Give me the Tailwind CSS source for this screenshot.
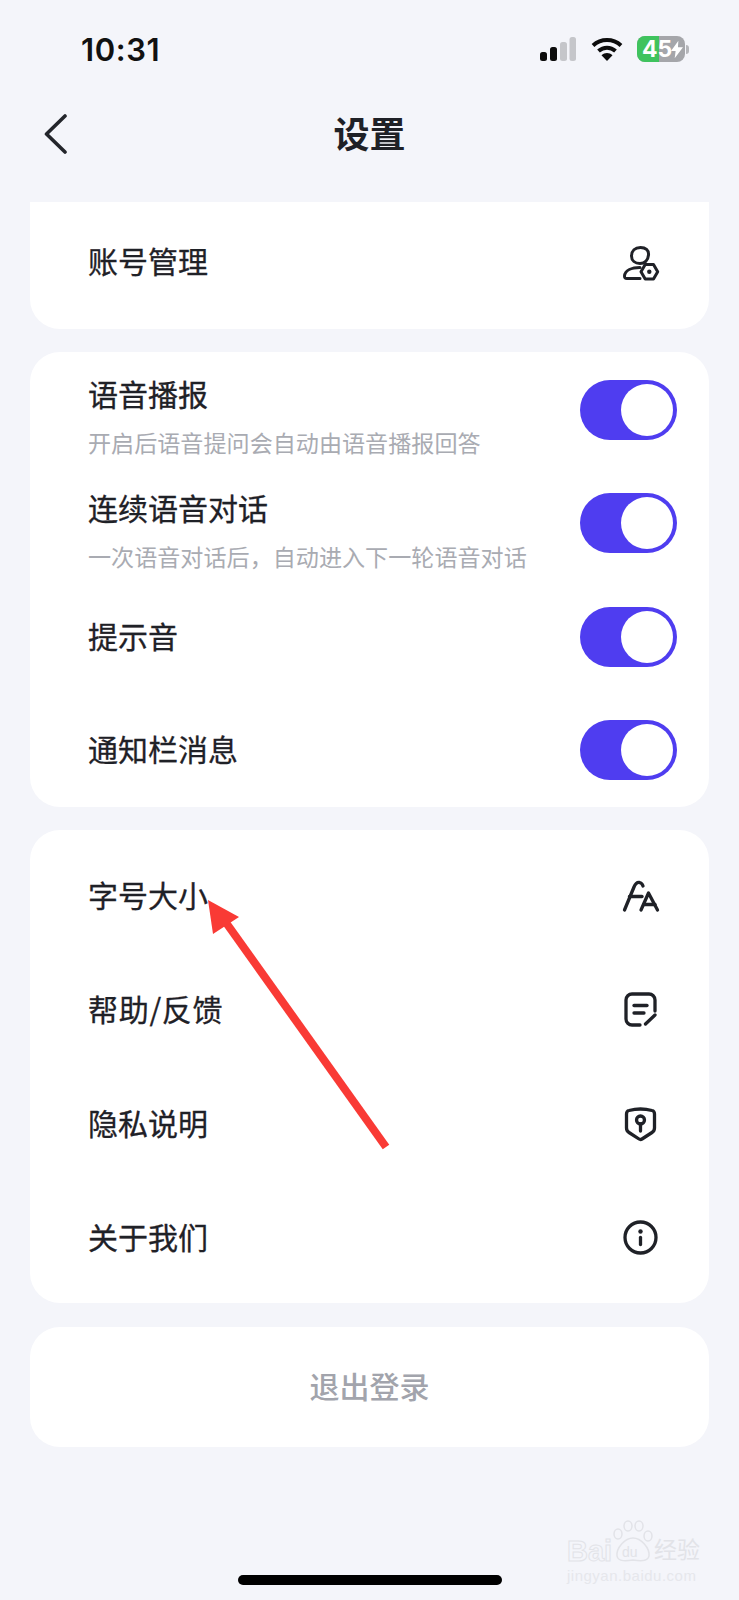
<!DOCTYPE html>
<html lang="zh-CN">
<head>
  <meta charset="UTF-8" />
  <meta name="viewport" content="width=device-width, initial-scale=1.0"/>
  <title>设置</title>
  <script src="https://cdn.jsdelivr.net/npm/@tailwindcss/browser@4"></script>
</head>
<body class="bg-[#f4f5fa]">
  <div class="relative w-[739px] h-[1600px] overflow-hidden bg-[#f4f5fa] text-[#1f2127] font-['Noto_Sans_CJK_SC',sans-serif]">

    <!-- status bar -->
    <div class="h-[98px] flex items-center pl-[81px] pr-[50px] justify-between">
      <span class="text-[31px] leading-none font-semibold text-[#111] font-['Inter',sans-serif] tracking-[0.6px]">10:31</span>
      <div class="flex items-center">
        <svg width="36" height="24" viewBox="0 0 36 24">
          <rect x="0" y="15" width="7" height="9" rx="2.5" fill="#0c0c0c"/>
          <rect x="10" y="10" width="7" height="14" rx="2.5" fill="#0c0c0c"/>
          <rect x="20" y="5" width="7" height="19" rx="2.5" fill="#c5c6ca"/>
          <rect x="29.5" y="0" width="6.5" height="24" rx="2.5" fill="#c5c6ca"/>
        </svg>
        <svg class="ml-[15px]" width="32" height="24" viewBox="0 0 32 24" fill="none" stroke="#0c0c0c" stroke-width="4">
          <path d="M2 8.5C10 1.2 22 1.2 30 8.5"/>
          <path d="M7.5 14C12.5 9.6 19.500 9.6 24.500 14"/>
          <path d="M16 24L10.500 18.200C13.800 15.400 18.200 15.400 21.500 18.200Z" fill="#0c0c0c" stroke="none"/>
        </svg>
        <div class="relative ml-[14px] w-[48px] h-[26px] rounded-[8px] overflow-hidden bg-[#a5a6aa] flex items-center">
          <div class="absolute left-0 top-0 bottom-0 w-[22px] bg-[#3fc35e]"></div>
          <span class="relative pl-[5px] text-[23px] leading-none font-bold text-white font-['Inter',sans-serif]">45</span>
          <svg class="absolute right-[2px] top-[4px]" width="12" height="19" viewBox="0 0 13 19"><path d="M8 0L0 11H5L4 19L13 7H7.500Z" fill="#fff"/></svg>
        </div>
        <div class="ml-[1px] w-[3px] h-[9px] rounded-r-full bg-[#b5b6ba]"></div>
      </div>
    </div>

    <!-- nav -->
    <div class="h-[72px] mb-[32px] grid grid-cols-[1fr_auto_1fr] items-center pl-[44px]">
      <svg width="24" height="42" viewBox="0 0 24 42" fill="none" stroke="#23252b" stroke-width="3.6" stroke-linecap="round" stroke-linejoin="round">
        <path d="M21 3L2.500 21L21 39"/>
      </svg>
      <h1 class="text-[36px] leading-none font-bold text-center -translate-x-[22px] pb-[5px]">设置</h1>
      <div></div>
    </div>

    <div class="mx-[30px] flex flex-col gap-[23.500px]">
      <!-- account -->
      <div class="h-[126.500px] bg-white rounded-b-[30px] pl-[58px] pr-[49px] pb-[6px] flex items-center justify-between">
        <span class="text-[30px] leading-none pb-[5px] [-webkit-text-stroke:0.3px_#1f2127]">账号管理</span>
        <svg width="40" height="40" viewBox="0 0 40 40" fill="none" stroke="#1f2127" stroke-width="3" stroke-linejoin="round" stroke-linecap="round">
          <path d="M20.500 5.500C25.500 5.500 29 8 28.500 13C28 18.500 24.500 21.500 20 21.500C15 21.500 11.500 18.500 11.500 14C11.500 9 15 5.500 20.500 5.500Z"/>
          <path d="M20 25.500C12 25.500 5 28 4.500 34C4.500 36 5 36.500 7 36.500H20"/>
          <path d="M21 29.700L25.200 22.500H33.500L37.700 29.700L33.500 37H25.200Z"/>
          <circle cx="29.300" cy="29.700" r="2.200" fill="#1f2127" stroke="none"/>
        </svg>
      </div>

      <!-- switches -->
      <div class="h-[454.500px] bg-white rounded-[30px] pt-[1px] pl-[58px] pr-[32px]">
        <div class="h-[113.500px] flex items-center justify-between">
          <div class="mt-[11px] flex flex-col">
            <span class="text-[30px] leading-[42px] [-webkit-text-stroke:0.3px_#1f2127]">语音播报</span>
            <span class="mt-[12px] text-[23.100px] leading-[32px] text-[#a9abb2]">开启后语音提问会自动由语音播报回答</span>
          </div>
          <div class="w-[97px] h-[60px] rounded-full bg-[#4f3df0] flex items-center justify-end pr-[4px]"><div class="w-[52px] h-[52px] rounded-full bg-white"></div></div>
        </div>
        <div class="h-[113.500px] flex items-center justify-between">
          <div class="mt-[11px] flex flex-col">
            <span class="text-[30px] leading-[42px] [-webkit-text-stroke:0.3px_#1f2127]">连续语音对话</span>
            <span class="mt-[12px] text-[23.100px] leading-[32px] text-[#a9abb2]">一次语音对话后，自动进入下一轮语音对话</span>
          </div>
          <div class="w-[97px] h-[60px] rounded-full bg-[#4f3df0] flex items-center justify-end pr-[4px]"><div class="w-[52px] h-[52px] rounded-full bg-white"></div></div>
        </div>
        <div class="h-[113.500px] flex items-center justify-between">
          <span class="text-[30px] leading-[42px] pb-[4px] [-webkit-text-stroke:0.3px_#1f2127]">提示音</span>
          <div class="w-[97px] h-[60px] rounded-full bg-[#4f3df0] flex items-center justify-end pr-[4px]"><div class="w-[52px] h-[52px] rounded-full bg-white"></div></div>
        </div>
        <div class="h-[113.500px] flex items-center justify-between">
          <span class="text-[30px] leading-[42px] pb-[4px] [-webkit-text-stroke:0.3px_#1f2127]">通知栏消息</span>
          <div class="w-[97px] h-[60px] rounded-full bg-[#4f3df0] flex items-center justify-end pr-[4px]"><div class="w-[52px] h-[52px] rounded-full bg-white"></div></div>
        </div>
      </div>

      <!-- links -->
      <div class="h-[473px] bg-white rounded-[30px] pl-[58px] pr-[49px] pt-[9px]">
        <div class="h-[114px] flex items-center justify-between">
          <span class="text-[30px] leading-none pb-[5px] [-webkit-text-stroke:0.3px_#1f2127]">字号大小</span>
          <svg width="40" height="40" viewBox="0 0 40 40" fill="none" stroke="#1f2127" stroke-width="3.3" stroke-linecap="round" stroke-linejoin="round">
            <path d="M4.500 34L14 11Q16 6 19.500 6.500Q22 7 23 10"/>
            <path d="M9.500 20.500H22"/>
            <path d="M21 34L28.500 17L37.500 34"/>
            <path d="M24 28.500H35"/>
          </svg>
        </div>
        <div class="h-[114px] flex items-center justify-between">
          <span class="text-[30px] leading-none pb-[5px] tracking-[0.7px] [-webkit-text-stroke:0.3px_#1f2127]">帮助/反馈</span>
          <svg width="40" height="40" viewBox="0 0 40 40" fill="none" stroke="#1f2127" stroke-width="3.3" stroke-linecap="round" stroke-linejoin="round">
            <path d="M20 35H12A6 6 0 0 1 6 29V10A6 6 0 0 1 12 4H29A6 6 0 0 1 35 10V21"/>
            <path d="M14 15.500H27"/>
            <path d="M14 23H24"/>
            <path d="M25.500 34L35 25"/>
          </svg>
        </div>
        <div class="h-[114px] flex items-center justify-between">
          <span class="text-[30px] leading-none pb-[5px] [-webkit-text-stroke:0.3px_#1f2127]">隐私说明</span>
          <svg width="40" height="40" viewBox="0 0 40 40" fill="none" stroke="#1f2127" stroke-width="3.3" stroke-linecap="round" stroke-linejoin="round">
            <path d="M9 6.500Q20.500 3.500 32 6.500Q34.500 7 34.500 10V24Q34.500 27 32 28.500L22 35Q20.500 36 19 35L9 28.500Q6.500 27 6.500 24V10Q6.500 7 9 6.500Z"/>
            <circle cx="20.500" cy="16" r="4"/>
            <path d="M20.500 20V27"/>
          </svg>
        </div>
        <div class="h-[114px] flex items-center justify-between">
          <span class="text-[30px] leading-none pb-[5px] [-webkit-text-stroke:0.3px_#1f2127]">关于我们</span>
          <svg width="40" height="40" viewBox="0 0 40 40" fill="none" stroke="#1f2127" stroke-width="3.3" stroke-linecap="round" stroke-linejoin="round">
            <circle cx="20.500" cy="19.500" r="15.500"/>
            <circle cx="20.500" cy="13.500" r="2.200" fill="#1f2127" stroke="none"/>
            <path d="M20.500 19.500V26.500"/>
          </svg>
        </div>
      </div>

      <!-- logout -->
      <div class="h-[120px] bg-white rounded-[30px] flex items-center justify-center">
        <span class="text-[30px] leading-none font-medium pb-[3px] text-[#a2a4ac]">退出登录</span>
      </div>
    </div>

    <!-- home indicator -->
    <div class="absolute left-[238px] top-[1575px] w-[264px] h-[10px] rounded-full bg-black"></div>

    <!-- annotation arrow -->
    <svg class="absolute left-0 top-0 pointer-events-none" width="739" height="1600" viewBox="0 0 739 1600">
      <path d="M386 1147L222 917" stroke="#f93a35" stroke-width="8" fill="none"/>
      <path d="M208 900L239 917L213 934Z" fill="#f93a35"/>
    </svg>

    <!-- watermark -->
    <div class="absolute left-[567px] top-[1520px] w-[134px] h-[64px]">
      <span class="absolute left-0 top-[17px] text-[29px] leading-none font-bold font-['Liberation_Sans',sans-serif] text-transparent [-webkit-text-stroke:1px_#e2e3e8]">Bai</span>
      <svg class="absolute left-[44px] top-0" width="44" height="44" viewBox="0 0 44 44" fill="none" stroke="#e2e3e8" stroke-width="1.500">
        <ellipse cx="7" cy="14" rx="4" ry="5"/>
        <ellipse cx="17" cy="6" rx="4" ry="5"/>
        <ellipse cx="28" cy="6" rx="4" ry="5"/>
        <ellipse cx="37" cy="16" rx="4" ry="5"/>
        <path d="M6 36C5 28 14 18 22 18C30 18 39 28 38 36C37 42 28 41 22 40C16 41 7 42 6 36Z"/>
      </svg>
      <span class="absolute left-[55px] top-[25px] text-[14px] leading-none font-['Liberation_Sans',sans-serif] text-[#e2e3e8]">du</span>
      <span class="absolute left-[87px] top-[17px] text-[23px] leading-none text-[#e2e3e8]">经验</span>
      <span class="absolute left-0 top-[48px] text-[15px] leading-none font-['Liberation_Sans',sans-serif] tracking-[0.5px] whitespace-nowrap text-[#e6e7ec]">jingyan.baidu.com</span>
    </div>
  </div>
</body>
</html>
